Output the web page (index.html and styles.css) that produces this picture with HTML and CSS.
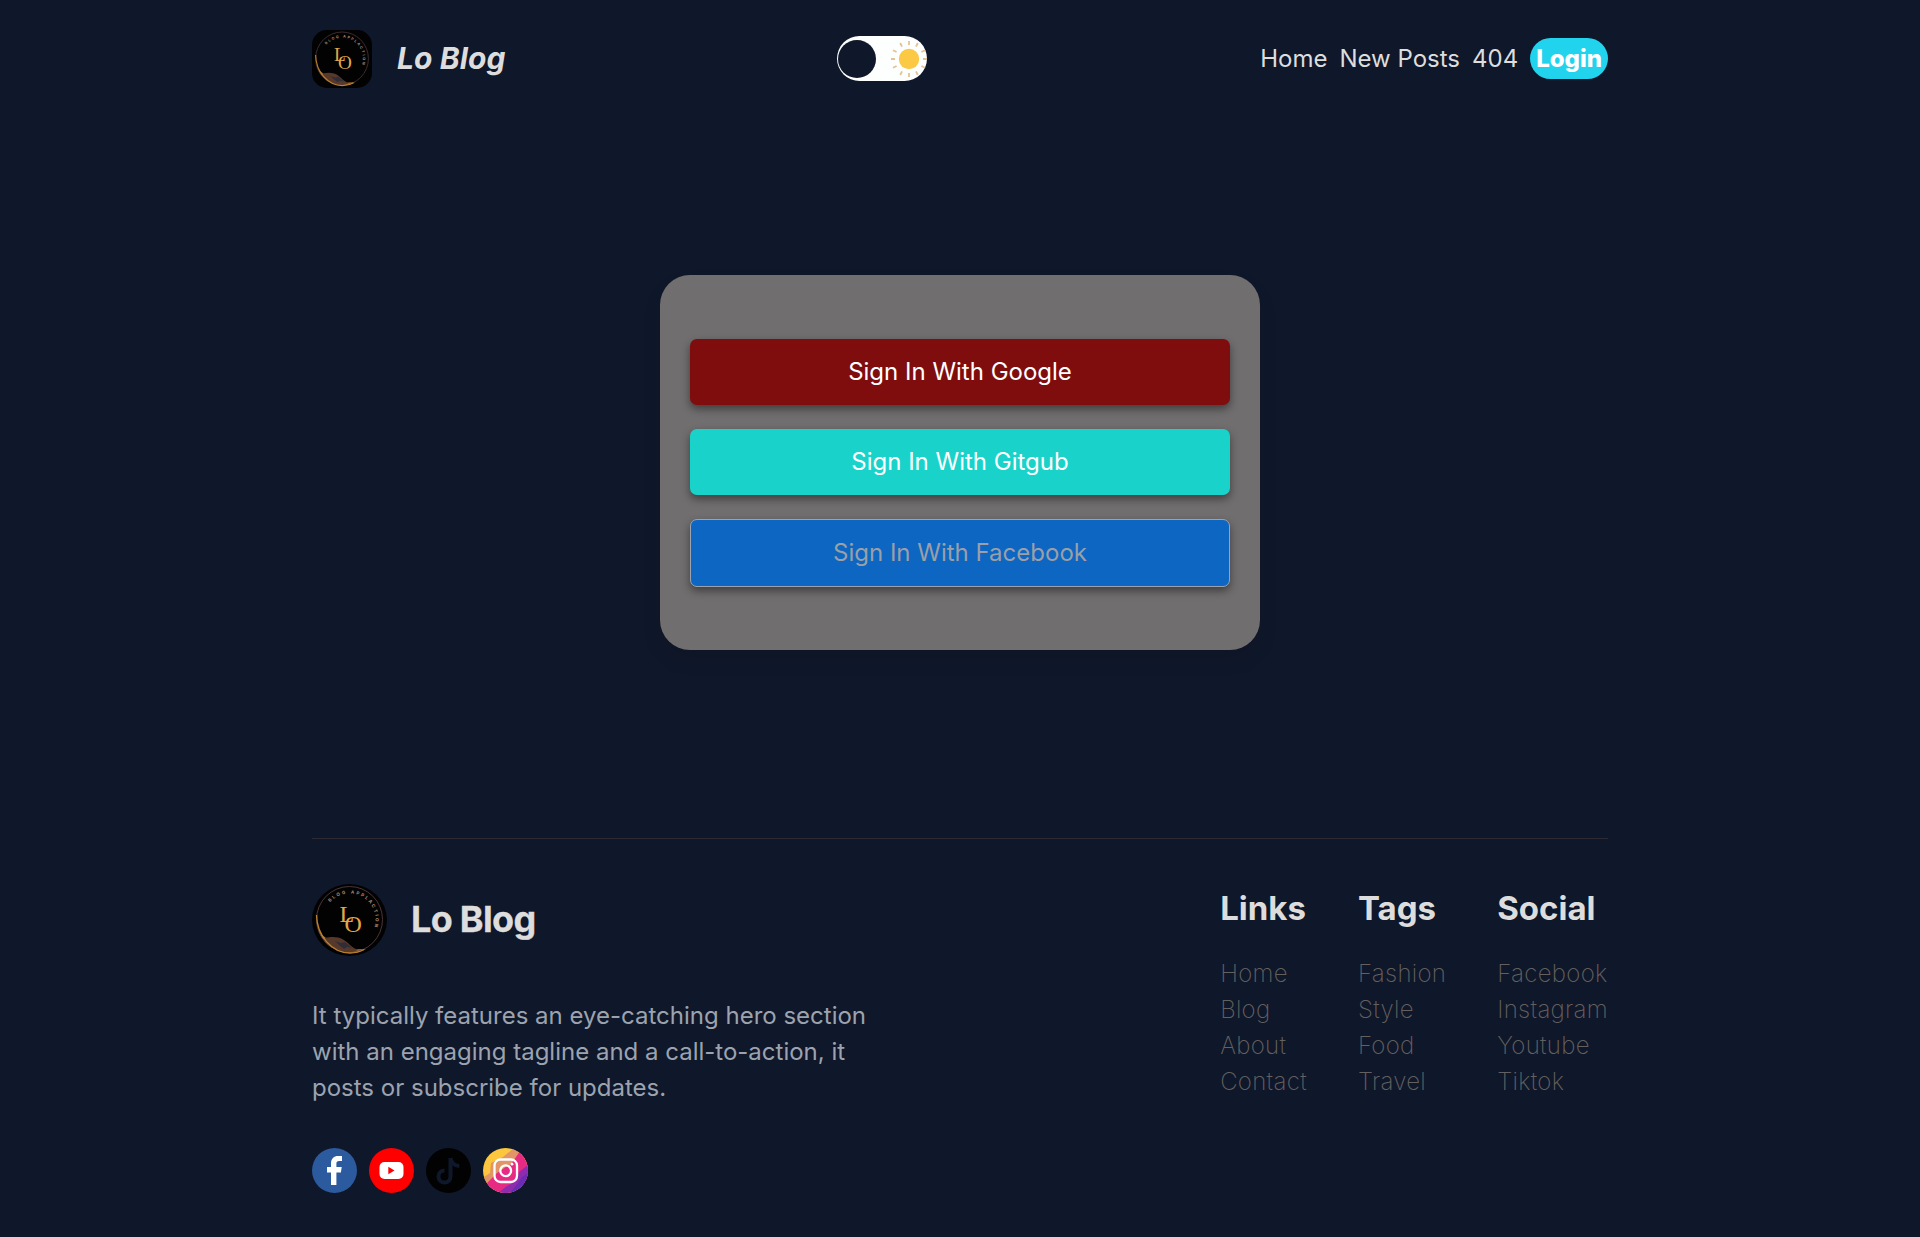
FILE: index.html
```html
<!DOCTYPE html>
<html lang="en">
<head>
<meta charset="utf-8">
<title>Lo Blog</title>
<link rel="stylesheet" href="styles.css">
</head>
<body>
<svg class="defs" aria-hidden="true">
  <defs>
    <symbol id="logo" viewBox="0 0 75 72" preserveAspectRatio="none">
      <rect width="75" height="72" fill="#020203"/>
      <path d="M4 31C4 43 7 49 14 54L20 64C10 57 4 47 4 31Z" fill="#b87426"/>
      <path d="M40 66Q46 65 54 65Q47 69 38 69Z" fill="#b87426"/>
      <path d="M13 54C26 51 32 55 38 61Q41 64 46 66C39 70 26 69 18 62L12 57Z" fill="#57392c"/>
      <path d="M23 57l6 2 4-1 7 6-5-1-3 2-5-4z" fill="#302c38"/>
      <ellipse cx="37.500" cy="35.500" rx="33" ry="33" fill="none" stroke="#4a3638" stroke-width="1"/>
      <path d="M4.500 31C5 52 20 69 38 69Q46 69 52 65.500" fill="none" stroke="#bd802c" stroke-width="1.400"/>
      <path id="ring" d="M18 18.300A26 26 0 0 1 62 44.300" fill="none"/>
      <text class="logo-ring"><textPath href="#ring" textLength="70">BLOG APPLACTION</textPath></text>
      <text class="logo-letter" x="27.500" y="38">L</text>
      <text class="logo-letter" x="32.500" y="48">O</text>
    </symbol>
  </defs>
</svg>
<div class="container">
  <header class="navbar">
    <a class="brand"><svg class="brand-logo"><use href="#logo"/></svg><span class="brand-name">Lo Blog</span></a>
    <div class="toggle">
      <span class="toggle-ball"></span>
      <svg class="sun" viewBox="0 0 36 36">
        <g stroke="#e6c292" stroke-width="1.800">
          <path d="M18 0v4M18 32v4M0 18h4M32 18h4"/>
          <path d="M9.200 2l1.800 3.600M26.800 2l-1.800 3.600M9.200 34l1.800-3.600M26.800 34l-1.800-3.600M2 9.200l3.600 1.800M34 9.200l-3.600 1.800M2 26.800l3.600-1.800M34 26.800l-3.600-1.800"/>
        </g>
        <circle cx="18" cy="18" r="10.200" fill="#fbc943"/>
      </svg>
    </div>
    <nav class="links"><a>Home</a><a>New Posts</a><a>404</a><a class="login">Login</a></nav>
  </header>
  <main class="login-page">
    <div class="card">
      <button class="signin google">Sign In With Google</button>
      <button class="signin github">Sign In With Gitgub</button>
      <button class="signin facebook" disabled>Sign In With Facebook</button>
    </div>
  </main>
  <footer class="footer">
    <div class="info">
      <div class="footer-brand"><svg class="footer-logo"><use href="#logo"/></svg><h1 class="footer-name">Lo Blog</h1></div>
      <p class="desc">It typically features an eye-catching hero section with an engaging tagline and a call-to-action, it posts or subscribe for updates.</p>
      <div class="icons">
        <svg viewBox="0 0 45 45"><circle cx="22.500" cy="22.500" r="22.500" fill="#2c5a9e"/><path d="M19 37V24.500h-4v-5.400h4V15.500C19 10.500 22 8 26 8h4v5h-2.800c-2.200 0-2.800 1-2.800 2.800v3.300h5.300l-.8 5.400h-4.500V37z" fill="#fff"/></svg>
        <svg viewBox="0 0 45 45"><circle cx="22.500" cy="22.500" r="22.500" fill="#f00"/><rect x="10.500" y="14" width="24" height="17" rx="5" fill="#fff"/><path d="M19.300 18.800v7.400l6.200-3.700z" fill="#f00"/></svg>
        <svg viewBox="0 0 45 45"><circle cx="22.500" cy="22.500" r="22.500" fill="#020202"/><path d="M24.500 10v18.500a6 6 0 1 1-6-6M24.500 10c.5 4.500 4 7.700 8.800 8" fill="none" stroke="#0f172a" stroke-width="4"/></svg>
        <svg viewBox="0 0 45 45"><defs><clipPath id="disc"><circle cx="22.500" cy="22.500" r="22.500"/></clipPath></defs>
          <g clip-path="url(#disc)"><path fill="#fcc63f" d="M0 0h45v45H0z"/><path fill="#e29566" d="M31 0L20 9 8 15 7 25 1 29v16h44V0z"/><path fill="#e82b82" d="M37 3L29 15 14 25 4 35v10h41V3z"/><path fill="#8e2bae" d="M45 17l-9 7-3 9-9 5-9 7h30z"/><path fill="#6a2bb5" d="M45 25l-6 4-4 6-8 10h18z"/></g>
          <rect x="11.500" y="11.500" width="22.500" height="22.500" rx="6" fill="none" stroke="#fff" stroke-width="2.300"/><circle cx="22.700" cy="22.700" r="5.400" fill="none" stroke="#fff" stroke-width="2.300"/><circle cx="29" cy="16.200" r="1.400" fill="#fff"/></svg>
      </div>
    </div>
    <div class="lists">
      <div class="list"><h2>Links</h2><a>Home</a><a>Blog</a><a>About</a><a>Contact</a></div>
      <div class="list"><h2>Tags</h2><a>Fashion</a><a>Style</a><a>Food</a><a>Travel</a></div>
      <div class="list"><h2>Social</h2><a>Facebook</a><a>Instagram</a><a>Youtube</a><a>Tiktok</a></div>
    </div>
  </footer>
</div>
</body>
</html>
```
FILE: styles.css
```css
* { box-sizing: border-box; margin: 0; padding: 0; }
body {
  min-height: 100vh;
  background: #0f172a;
  color: #ddd;
  font: 24px/36px Inter, sans-serif;
}
.defs { position: absolute; width: 0; height: 0; }
.container { width: 1296px; margin: 0 auto; }
.logo-ring { font: 700 4.5px Inter, sans-serif; fill: #b08a70; }
.logo-letter { font: 24px "Liberation Serif", serif; fill: #e1a84a; }

.navbar { display: flex; align-items: center; justify-content: space-between; height: 117px; }
.brand { display: flex; align-items: center; gap: 25px; }
.brand-logo { width: 60px; height: 58px; border-radius: 15px; }
.brand-name { padding-bottom: 1px; font-size: 30px; font-weight: 700; font-style: italic; letter-spacing: .1px; }
.toggle {
  display: flex; align-items: center; justify-content: space-between;
  width: 90px; height: 45px; padding: 0 0 0 1px; margin: 0 1px 0 -1px;
  border-radius: 23px; background: #fdfefe;
}
.toggle-ball { width: 38px; height: 38px; border-radius: 50%; background: #0f172a; }
.sun { width: 36px; height: 36px; }
.links { display: flex; align-items: center; gap: 12px; }
.login {
  padding: 0 6px; border-radius: 21px;
  background: #22d3ee; color: #fff;
  font-weight: 800; line-height: 41px;
}

.login-page { display: flex; align-items: center; justify-content: center; height: 691px; }
.card {
  display: flex; flex-direction: column; justify-content: center; gap: 24px;
  width: 600px; height: 375px; padding: 0 30px;
  border-radius: 30px; background: #716e6f;
  box-shadow: 0 10px 20px rgba(0, 0, 0, .08);
}
.signin {
  height: 66px; border: 0; border-radius: 7px;
  color: #fff; font: inherit;
  box-shadow: 0 4px 8px rgba(0, 0, 0, .45);
}
.google { background: #7f0d0d; }
.github { background: #19d3ca; }
.facebook { height: 68px; border: 1px solid #9ca3af; background: #0c66c2; color: #9a9fa8; }

.footer {
  display: flex; justify-content: space-between;
  margin-top: 30px; padding-top: 45px; border-top: 1px solid #2d2933;
}
.info { width: 576px; }
.footer-brand { display: flex; align-items: center; gap: 24px; height: 72px; }
.footer-logo { width: 75px; height: 72px; border-radius: 50%; }
.footer-name { padding-bottom: 2px; font-size: 36px; font-weight: 700; letter-spacing: -.7px; -webkit-text-stroke: .3px #ddd; }
.desc { margin-top: 42px; color: #9ca3af; }
.icons { display: flex; gap: 12px; margin-top: 42px; }
.icons svg { width: 45px; height: 45px; }
.lists { display: flex; gap: 51px; }
.list { display: flex; flex-direction: column; color: #64605f; font-weight: 200; letter-spacing: .3px; }
.list h2 { margin: 4px 0 28px; color: #ddd; font-size: 33px; font-weight: 700; line-height: 40px; letter-spacing: 0; }
```
